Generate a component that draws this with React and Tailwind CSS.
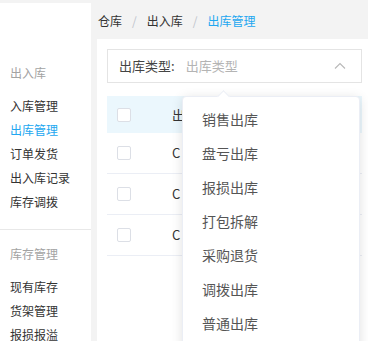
import React from "react";

const font = { fontFamily: '"Noto Sans CJK SC", "Noto Sans", sans-serif' };

function Checkbox() {
  return <div className="w-[14px] h-[14px] shrink-0 border border-[#dcdfe6] rounded-[2px] bg-white" />;
}

export default function App() {
  const g1 = ["入库管理", "出库管理", "订单发货", "出入库记录", "库存调拨"];
  const g2 = ["现有库存", "货架管理", "报损报溢"];
  const menu = ["销售出库", "盘亏出库", "报损出库", "打包拆解", "采购退货", "调拨出库", "普通出库"];
  return (
    <div className="w-[368px] h-[341px] overflow-hidden bg-[#f3f3f3] flex" style={font}>
      <div className="w-[91px] shrink-0 mt-[3px] bg-white pt-[58px] text-[12px]">
        <div className="px-[10px]">
          <div className="h-[24px] leading-[24px] text-[#a3a3a3]">出入库</div>
          <div className="mt-[9px]">
            {g1.map((t) => (
              <div key={t} className={"h-[24px] leading-[24px] " + (t === "出库管理" ? "text-[#22a7f0]" : "text-[#333]")}>{t}</div>
            ))}
          </div>
        </div>
        <div className="mt-[15px] border-t border-[#e8e8e8]" />
        <div className="px-[10px] pt-[12px]">
          <div className="h-[24px] leading-[24px] text-[#a3a3a3]">库存管理</div>
          <div className="mt-[9px]">
            {g2.map((t) => (
              <div key={t} className="h-[24px] leading-[24px] text-[#333]">{t}</div>
            ))}
          </div>
        </div>
      </div>
      <div className="flex-1 pl-[6px] flex flex-col min-w-0">
        <div className="pt-[9px] h-[33px] pl-[1px] text-[12px] leading-[24px] flex items-center gap-[10px]">
          <span className="text-[#333]">仓库</span>
          <span className="text-[#c0c4cc]">/</span>
          <span className="text-[#333]">出入库</span>
          <span className="text-[#c0c4cc]">/</span>
          <span className="text-[#22a7f0]">出库管理</span>
        </div>
        <div className="mt-[6px] flex-1 bg-white w-[275px] relative px-[10px] pt-[10px]">
          <div className="h-[34px] border border-[#e4e4e4] flex items-center px-[11px] text-[13px]">
            <span className="text-[#444]">出库类型:</span>
            <span className="ml-[11px] text-[#b4b4b4]">出库类型</span>
            <svg className="ml-auto mr-[4px]" width="12" height="8" viewBox="0 0 12 8">
              <path d="M1 6.5 L6 1.5 L11 6.5" fill="none" stroke="#b8b8b8" strokeWidth="1.1" />
            </svg>
          </div>
          <div className="mt-[13px] text-[13px]">
            <div className="h-[37px] bg-[#ebf7fd] flex items-center pl-[10px]">
              <Checkbox />
              <span className="ml-[41px] text-[#333]">出</span>
            </div>
            {[0, 1, 2].map((i) => (
              <div key={i} className="h-[41px] border-b border-[#ebeef5] flex items-center pl-[10px]">
                <Checkbox />
                <span className="ml-[41px] text-[#333]">C</span>
              </div>
            ))}
          </div>
          <div className="absolute left-[85px] top-[57px] w-[178px] h-[300px] bg-white rounded-[4px] border border-[#ebeef5] shadow-[0_2px_12px_rgba(0,0,0,0.12)] pt-[5px]">
            <div className="absolute -top-[5px] left-[36px] w-[9px] h-[9px] bg-white border-l border-t border-[#ebeef5] rotate-45" />
            {menu.map((t) => (
              <div key={t} className="h-[34px] leading-[34px] pl-[19px] text-[14px] text-[#555]">{t}</div>
            ))}
          </div>
        </div>
      </div>
    </div>
  );
}
